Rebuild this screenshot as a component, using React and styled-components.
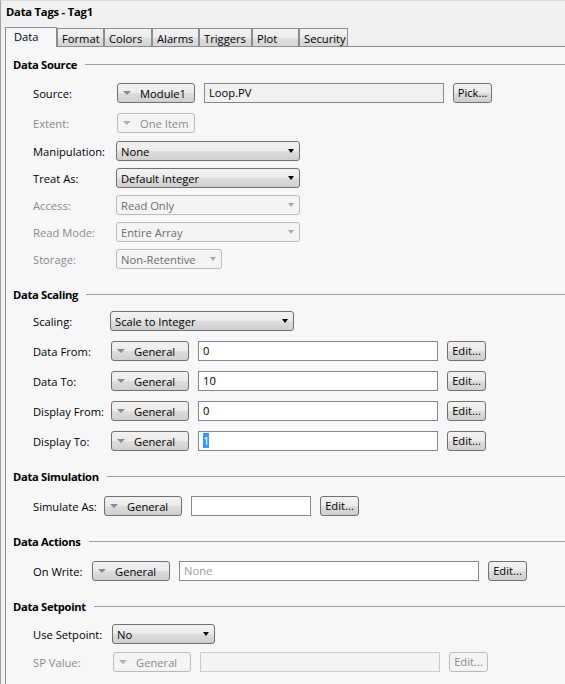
import React from "react";
import styled, { createGlobalStyle } from "styled-components";

const GlobalStyle = createGlobalStyle`
  html, body { margin: 0; padding: 0; background: #f0f0f0; }
  body {
    font-family: "Open Sans", "Noto Sans", "DejaVu Sans", sans-serif;
    font-size: 11.2px;
    color: #000;
  }
`;

// Window frame
const Window = styled.div`
  width: 565px;
  height: 684px;
  box-sizing: border-box;
  border-left: 1px solid #a0a0a0;
  border-top: 1px solid #dadada;
  background: #f0f0f0;
  display: flex;
  flex-direction: column;
  overflow: hidden;
`;

const Title = styled.div`
  flex-shrink: 0;
  height: 26px;
  line-height: 22px;
  padding-left: 5px;
  font-weight: bold;
  letter-spacing: -0.2px;
`;

const Notebook = styled.div`
  flex: 1;
  margin-left: 4px;
  display: flex;
  flex-direction: column;
`;

// Tabs
const TabBar = styled.div`
  flex-shrink: 0;
  display: flex;
  align-items: flex-end;
  height: 20px;
  box-sizing: border-box;
  border-bottom: 1px solid #898c95;
`;

const Tab = styled.div`
  position: relative;
  width: ${p => p.$w}px;
  box-sizing: border-box;
  height: ${p => (p.$active ? 20 : 18)}px;
  margin-bottom: ${p => (p.$active ? -1 : 0)}px;
  padding-left: ${p => (p.$active ? 8 : 4)}px;
  padding-top: ${p => (p.$active ? 1 : 2)}px;
  line-height: 16px;
  border: 1px solid #898c95;
  border-bottom: none;
  background: ${p =>
    p.$active
      ? "#f7f7f9"
      : "linear-gradient(#f3f3f3 0%, #ebebeb 50%, #dedede 51%, #d6d6d6 100%)"};
  z-index: ${p => (p.$active ? 1 : 0)};
`;

const Panel = styled.div`
  flex: 1;
  border-left: 1px solid #898c95;
  background: #f7f7f9;
  padding: 9px 0 0 7px;
  display: flex;
  flex-direction: column;
`;

// Sections
const Section = styled.section`
  display: flex;
  flex-direction: column;
  margin-bottom: 17px;
  &:last-child { margin-bottom: 0; }
`;

const Heading = styled.div`
  display: flex;
  align-items: center;
  gap: 8px;
  height: 16px;
  font-weight: bold;
  letter-spacing: -0.3px;
  &::after {
    content: "";
    flex: 1;
    height: 1px;
    background: #a0a0a0;
  }
`;

const Rows = styled.div`
  display: flex;
  flex-direction: column;
  gap: ${p => p.$gap}px;
  margin-top: ${p => p.$mt}px;
  padding-left: 20px;
`;

const Row = styled.div`
  display: flex;
  align-items: center;
  gap: 9px;
  height: 20px;
  margin-top: ${p => p.$mt || 0}px;
`;

const Label = styled.div`
  width: ${p => p.$w}px;
  margin-right: -9px;
  flex-shrink: 0;
  color: ${p => (p.$disabled ? "#8a8a8a" : "#000")};
`;

const buttonFace = "linear-gradient(#f2f2f2 0%, #ebebeb 50%, #dddddd 51%, #cfcfcf 100%)";

// Drop-down button with small grey arrow on the left
const DropButton = styled.div`
  width: 78px;
  height: 20px;
  box-sizing: border-box;
  border: 1px solid ${p => (p.$disabled ? "#b9bcbf" : "#707070")};
  border-radius: 3px;
  background: ${p => (p.$disabled ? "#f4f4f4" : buttonFace)};
  color: ${p => (p.$disabled ? "#8a8a8a" : "#000")};
  display: flex;
  align-items: center;
  padding-left: 5px;
  gap: 9px;
  flex-shrink: 0;
  &::before {
    content: "";
    border-left: 4px solid transparent;
    border-right: 4px solid transparent;
    border-top: 4px solid ${p => (p.$disabled ? "#b0b0b0" : "#8a8a8a")};
  }
`;

// Combo box with black arrow on the right
const Select = styled.div`
  width: ${p => p.$w}px;
  height: 20px;
  box-sizing: border-box;
  border: 1px solid ${p => (p.$disabled ? "#b9bcbf" : "#707070")};
  border-radius: 3px;
  background: ${p => (p.$disabled ? "#f4f4f4" : buttonFace)};
  color: ${p => (p.$disabled ? "#6d6d6d" : "#000")};
  display: flex;
  align-items: center;
  justify-content: space-between;
  padding: 0 5px 0 4px;
  flex-shrink: 0;
  &::after {
    content: "";
    border-left: 3.5px solid transparent;
    border-right: 3.5px solid transparent;
    border-top: 4px solid ${p => (p.$disabled ? "#a8a8a8" : "#000")};
  }
`;

const Field = styled.div`
  width: ${p => p.$w}px;
  height: 20px;
  box-sizing: border-box;
  border: 1px solid ${p => (p.$disabled ? "#c9cbce" : "#828790")};
  background: ${p => (p.$disabled ? "#f4f4f4" : p.$readOnly ? "#f1f1f1" : "#fff")};
  color: ${p => (p.$placeholder ? "#9a9a9a" : "#000")};
  padding: 0 4px;
  line-height: 17px;
  flex-shrink: 0;
`;

const Selected = styled.span`
  background: #3399ff;
  color: #fff;
`;

const Button = styled.div`
  width: 39px;
  height: 20px;
  box-sizing: border-box;
  border: 1px solid ${p => (p.$disabled ? "#b9bcbf" : "#707070")};
  border-radius: 3px;
  background: ${p => (p.$disabled ? "#f4f4f4" : buttonFace)};
  color: ${p => (p.$disabled ? "#8a8a8a" : "#000")};
  text-align: center;
  line-height: 17px;
  flex-shrink: 0;
`;

const tabs = [
  ["Data", 52],
  ["Format", 47],
  ["Colors", 48],
  ["Alarms", 47],
  ["Triggers", 53],
  ["Plot", 47],
  ["Security", 49],
];

const ScaleRow = ({ label, value }) => (
  <Row>
    <Label $w={78}>{label}</Label>
    <DropButton>General</DropButton>
    <Field $w={240}>{value}</Field>
    <Button>Edit...</Button>
  </Row>
);

export default function App() {
  return (
    <Window>
      <GlobalStyle />
      <Title>Data Tags - Tag1</Title>
      <Notebook>
        <TabBar>
          {tabs.map(([name, w], i) => (
            <Tab key={name} $w={w} $active={i === 0}>
              {name}
            </Tab>
          ))}
        </TabBar>
        <Panel>
          <Section>
            <Heading>Data Source</Heading>
            <Rows $gap={7} $mt={11}>
              <Row>
                <Label $w={84}>Source:</Label>
                <DropButton>Module1</DropButton>
                <Field $w={240} $readOnly>Loop.PV</Field>
                <Button>Pick...</Button>
              </Row>
              <Row $mt={3}>
                <Label $w={84} $disabled>Extent:</Label>
                <DropButton $disabled>One Item</DropButton>
              </Row>
              <Row $mt={1}>
                <Label $w={83}>Manipulation:</Label>
                <Select $w={184}>None</Select>
              </Row>
              <Row>
                <Label $w={83}>Treat As:</Label>
                <Select $w={184}>Default Integer</Select>
              </Row>
              <Row>
                <Label $w={83} $disabled>Access:</Label>
                <Select $w={184} $disabled>Read Only</Select>
              </Row>
              <Row>
                <Label $w={83} $disabled>Read Mode:</Label>
                <Select $w={184} $disabled>Entire Array</Select>
              </Row>
              <Row>
                <Label $w={83} $disabled>Storage:</Label>
                <Select $w={106} $disabled>Non-Retentive</Select>
              </Row>
            </Rows>
          </Section>

          <Section>
            <Heading>Data Scaling</Heading>
            <Rows $gap={10} $mt={9}>
              <Row>
                <Label $w={77}>Scaling:</Label>
                <Select $w={184}>Scale to Integer</Select>
              </Row>
              <ScaleRow label="Data From:" value="0" />
              <ScaleRow label="Data To:" value="10" />
              <ScaleRow label="Display From:" value="0" />
              <ScaleRow label="Display To:" value={<Selected>1</Selected>} />
            </Rows>
          </Section>

          <Section>
            <Heading>Data Simulation</Heading>
            <Rows $gap={8} $mt={12}>
              <Row>
                <Label $w={71}>Simulate As:</Label>
                <DropButton>General</DropButton>
                <Field $w={120} />
                <Button>Edit...</Button>
              </Row>
            </Rows>
          </Section>

          <Section>
            <Heading>Data Actions</Heading>
            <Rows $gap={8} $mt={12}>
              <Row>
                <Label $w={59}>On Write:</Label>
                <DropButton>General</DropButton>
                <Field $w={300} $placeholder>None</Field>
                <Button>Edit...</Button>
              </Row>
            </Rows>
          </Section>

          <Section>
            <Heading>Data Setpoint</Heading>
            <Rows $gap={8} $mt={10}>
              <Row>
                <Label $w={79}>Use Setpoint:</Label>
                <Select $w={103}>No</Select>
              </Row>
              <Row>
                <Label $w={80} $disabled>SP Value:</Label>
                <DropButton $disabled>General</DropButton>
                <Field $w={240} $disabled />
                <Button $disabled>Edit...</Button>
              </Row>
            </Rows>
          </Section>
        </Panel>
      </Notebook>
    </Window>
  );
}
